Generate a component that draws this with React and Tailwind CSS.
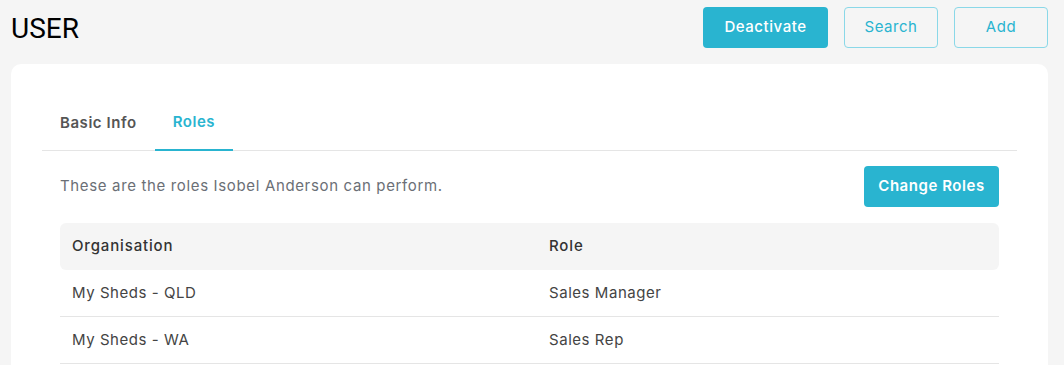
export default function App() {
  const rows = [
    ["My Sheds - QLD", "Sales Manager"],
    ["My Sheds - WA", "Sales Rep"],
  ];
  return (
    <div className="min-h-[365px] bg-[#f5f5f5] pl-[11px] pr-[16px] pt-[7px] font-['Inter',sans-serif] tracking-[0.55px]">
      <div className="flex items-start justify-between">
        <h1 className="mt-[4px] text-[28px] leading-[36px] tracking-normal text-black font-['Roboto',sans-serif] font-normal">USER</h1>
        <div className="flex gap-[16px]">
          <button className="h-[41px] w-[125px] rounded-[4px] bg-[#29b4d0] text-[15px] font-medium text-white">Deactivate</button>
          <button className="h-[41px] w-[94px] rounded-[4px] border border-[#8ad8e8] text-[15px] text-[#29b4d0]">Search</button>
          <button className="h-[41px] w-[94px] rounded-[4px] border border-[#8ad8e8] text-[15px] text-[#29b4d0]">Add</button>
        </div>
      </div>
      <div className="mt-[16px] rounded-[10px] bg-white px-[31px] pt-[32px] pb-[20px]">
        <div className="flex border-b border-[#e5e5e5]">
          <div className="flex h-[54px] items-center px-[18px] text-[15px] font-semibold text-[#555]">Basic Info</div>
          <div className="-mb-px flex h-[55px] items-center border-b-2 border-[#29b4d0] px-[18px] text-[15px] font-semibold text-[#29b4d0]">Roles</div>
        </div>
        <div className="px-[18px]">
          <div className="mt-[15px] flex items-center justify-between">
            <p className="text-[15px] text-[#6b6f76] tracking-[0.65px]">These are the roles Isobel Anderson can perform.</p>
            <button className="h-[41px] w-[135px] rounded-[4px] bg-[#29b4d0] text-[15px] font-semibold text-white">Change Roles</button>
          </div>
          <div className="mt-[16px] text-[15px]">
            <div className="grid h-[47px] grid-cols-[477px_1fr] items-center rounded-[6px] bg-[#f5f5f5] font-medium tracking-[0.85px] text-[#333]">
              <div className="px-[12px]">Organisation</div>
              <div className="px-[12px]">Role</div>
            </div>
            {rows.map((r) => (
              <div key={r[0]} className="grid h-[47px] grid-cols-[477px_1fr] items-center border-b border-[#e5e5e5] text-[#444]">
                <div className="px-[12px]">{r[0]}</div>
                <div className="px-[12px]">{r[1]}</div>
              </div>
            ))}
          </div>
        </div>
      </div>
    </div>
  );
}
